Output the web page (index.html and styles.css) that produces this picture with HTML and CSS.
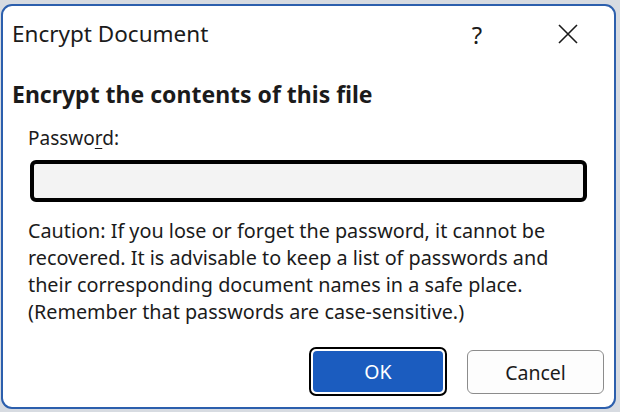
FILE: index.html
```html
<!DOCTYPE html>
<html>
<head>
<meta charset="utf-8">
<link rel="stylesheet" href="styles.css">
</head>
<body>
<div class="dialog">
  <div class="titlebar">
    <div class="title">Encrypt Document</div>
    <div class="help">?</div>
    <div class="close">
      <svg width="22" height="22" viewBox="0 0 22 22"><path d="M2 2 L20 20 M20 2 L2 20" stroke="#1a1a1a" stroke-width="1.6" fill="none"/></svg>
    </div>
  </div>
  <div class="content">
    <h1 class="heading">Encrypt the contents of this file</h1>
    <div class="group">
      <label class="label">Passwo<u>r</u>d:</label>
      <div class="input"></div>
      <p class="caution">Caution: If you lose or forget the password, it cannot be recovered. It is advisable to keep a list of passwords and their corresponding document names in a safe place. (Remember that passwords are case-sensitive.)</p>
    </div>
    <div class="buttons">
      <div class="btn ok"><span>OK</span></div>
      <div class="btn cancel">Cancel</div>
    </div>
  </div>
</div>
</body>
</html>
```
FILE: styles.css
```css
html, body {
  margin: 0;
  padding: 0;
}
body {
  width: 620px;
  height: 412px;
  background: #d7dbe1;
  font-family: "Noto Sans", "Open Sans", sans-serif;
  color: #1b1b1b;
  overflow: hidden;
}
.dialog {
  box-sizing: border-box;
  margin: 4px 0 0 1px;
  width: 615px;
  height: 405px;
  background: #ffffff;
  border: 2px solid #2c5fad;
  border-radius: 11px;
  display: flex;
  flex-direction: column;
}
.titlebar {
  display: flex;
  align-items: center;
  height: 56px;
  padding-left: 9px;
}
.title {
  flex: 1;
  font-size: 22.5px;
  padding-bottom: 2px;
}
.help {
  font-size: 24px;
  width: 40px;
  margin-right: 60px;
  text-align: center;
}
.close {
  width: 22px;
  height: 22px;
  margin-right: 35px;
  display: flex;
}
.content {
  padding: 0 0 0 9px;
  display: flex;
  flex-direction: column;
  flex: 1;
}
.heading {
  margin: 17px 0 0 0;
  font-size: 23px;
  font-weight: bold;
  line-height: 30px;
}
.group {
  padding-left: 18px;
}
.label {
  display: block;
  margin-top: 16px;
  font-size: 19px;
  line-height: 26px;
  margin-left: -2px;
}
.label u {
  text-decoration-thickness: 1px;
  text-underline-offset: 3px;
}
.input {
  box-sizing: border-box;
  margin-top: 9px;
  width: 557px;
  height: 42px;
  background: #f3f3f3;
  border: 4px solid #000;
  border-radius: 6px;
}
.caution {
  margin: 15px 0 0 -2px;
  width: 545px;
  font-size: 19.8px;
  line-height: 27px;
}
.buttons {
  display: flex;
  justify-content: flex-end;
  gap: 20px;
  margin-top: 25px;
  padding-right: 10px;
}
.btn {
  box-sizing: border-box;
  height: 44px;
  display: flex;
  align-items: center;
  justify-content: center;
  font-size: 19.5px;
  border-radius: 6px;
}
.ok {
  width: 138px;
  height: 49px;
  border: 2px solid #000;
  border-radius: 7px;
  padding: 2px;
  margin-top: -3px;
}
.ok span {
  flex: 1;
  align-self: stretch;
  display: flex;
  align-items: center;
  justify-content: center;
  background: #1b5cbf;
  color: #fff;
  border-radius: 4px;
}
.cancel {
  width: 137px;
  border: 1px solid #8c8c8c;
  background: #fdfdfd;
}
```
